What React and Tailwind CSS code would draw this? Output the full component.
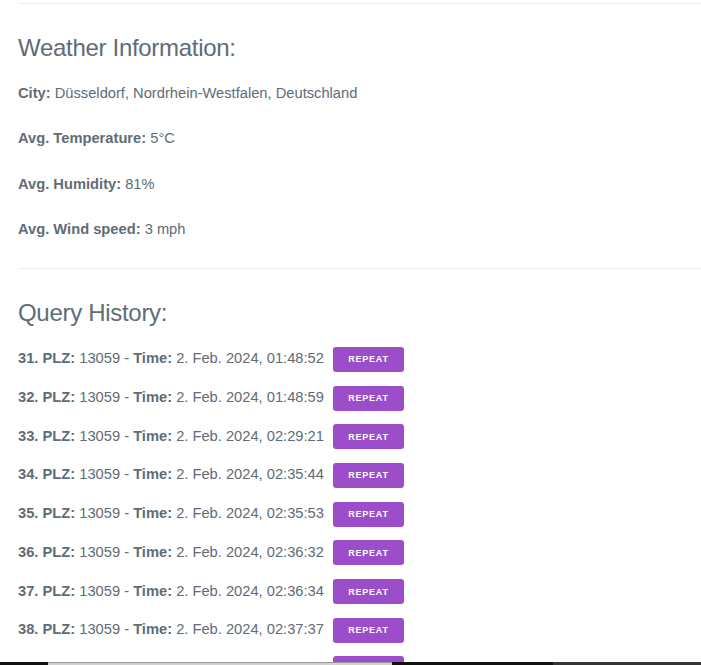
import React from 'react';

const weather = [
  { label: 'City:', value: 'Düsseldorf, Nordrhein-Westfalen, Deutschland' },
  { label: 'Avg. Temperature:', value: '5°C' },
  { label: 'Avg. Humidity:', value: '81%' },
  { label: 'Avg. Wind speed:', value: '3 mph' },
];

const history = [
  { n: 31, plz: '13059', time: '2. Feb. 2024, 01:48:52' },
  { n: 32, plz: '13059', time: '2. Feb. 2024, 01:48:59' },
  { n: 33, plz: '13059', time: '2. Feb. 2024, 02:29:21' },
  { n: 34, plz: '13059', time: '2. Feb. 2024, 02:35:44' },
  { n: 35, plz: '13059', time: '2. Feb. 2024, 02:35:53' },
  { n: 36, plz: '13059', time: '2. Feb. 2024, 02:36:32' },
  { n: 37, plz: '13059', time: '2. Feb. 2024, 02:36:34' },
  { n: 38, plz: '13059', time: '2. Feb. 2024, 02:37:37' },
  { n: 39, plz: '13059', time: '2. Feb. 2024, 02:38:01' },
];

function App() {
  return (
    <div className="h-[665px] overflow-hidden bg-white pl-[18px] pt-[3px] text-[14.7px] leading-[20px] text-[#606c76] font-['Liberation_Sans',Arial,sans-serif]">
      <hr className="border-0 border-t border-[#eeeeee]" />

      {/* Weather */}
      <h3 className="mt-[31px] text-[24px] leading-[26px] font-light tracking-[-0.3px]">Weather Information:</h3>
      <div className="mt-[22px] flex flex-col gap-[25.3px]">
        {weather.map((w, i) => (
          <p key={i}>
            <strong className="font-bold">{w.label}</strong> {w.value}
          </p>
        ))}
      </div>

      <hr className="mt-[29px] border-0 border-t border-[#eeeeee]" />

      {/* History */}
      <h3 className="mt-[31px] text-[24px] leading-[26px] font-light tracking-[-0.3px]">Query History:</h3>
      <div className="mt-[21px] flex flex-col gap-[13.7px]">
        {history.map((h) => (
          <div key={h.n} className="flex h-[25px] items-center">
            <span className="-mt-[2px]">
              <strong className="font-bold">{h.n}. PLZ:</strong> {h.plz} - <strong className="font-bold">Time:</strong> {h.time}
            </span>
            <button className="ml-[9px] h-[25px] w-[71px] shrink-0 rounded-[3px] bg-[#9b4dca] text-[9px] font-bold uppercase tracking-[0.8px] text-white">
              Repeat
            </button>
          </div>
        ))}
      </div>

      {/* screen edge strip */}
      <div className="fixed bottom-0 left-0 flex h-[3px] w-full">
        <div className="w-[48px] bg-[#111111]" />
        <div className="w-[344px] border-t border-[#9a9a9a] bg-[#d0d0d0]" />
        <div className="w-[161px] bg-[#111111]" />
        <div className="flex-1 bg-[#333333]" />
      </div>
    </div>
  );
}

export default App;
